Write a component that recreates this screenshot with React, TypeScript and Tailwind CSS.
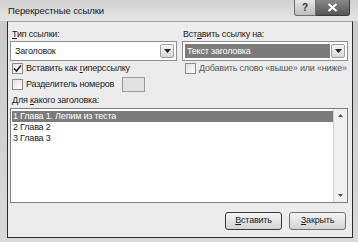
import React from 'react';

const Check: React.FC<{ checked?: boolean }> = ({ checked }) => (
  <div className="w-[11px] h-[11px] border border-[#8a8a8a] bg-gradient-to-br from-[#e2e2e2] to-[#fdfdfd] flex items-center justify-center shrink-0">
    {checked && (
      <svg width="9" height="9" viewBox="0 0 9 9">
        <path d="M1 4.5 L3.5 7 L8 1.5" fill="none" stroke="#222" strokeWidth="1.6" />
      </svg>
    )}
  </div>
);

const DropBtn: React.FC = () => (
  <div className="w-[14px] h-full border border-[#a0a0a0] rounded-[2px] bg-gradient-to-b from-[#f4f4f4] to-[#d6d6d6] flex items-center justify-center shrink-0">
    <svg width="7" height="4" viewBox="0 0 7 4">
      <path d="M0 0 H7 L3.5 4 Z" fill="#222" />
    </svg>
  </div>
);

const App: React.FC = () => {
  const items = ['1 Глава 1. Лепим из теста', '2 Глава 2', '3 Глава 3'];

  return (
    <div
      className="w-[358px] h-[242px] bg-gradient-to-b from-[#c9c9c9] to-[#d9d9d9] overflow-hidden text-[#1a1a1a] text-[9px] tracking-[-0.2px] whitespace-nowrap"
      style={{ fontFamily: '"Liberation Sans", Arial, sans-serif' }}
    >
      {/* title bar */}
      <div className="h-[21px] flex items-start bg-gradient-to-b from-[#d2d2d2] to-[#e4e4e4]">
        <div className="pl-[8px] pt-[5px] text-[9.5px] tracking-[-0.1px] leading-[12px]">Перекрестные ссылки</div>
        <div className="ml-auto mr-[8px] flex">
          <div className="w-[22px] h-[16px] border border-[#6f6f6f] border-t-0 rounded-bl-[3px] bg-gradient-to-b from-[#e8e8e8] to-[#bdbdbd] flex items-center justify-center text-[10px] font-bold text-[#333]">
            ?
          </div>
          <div className="w-[34px] h-[16px] border border-[#3c3c3c] border-l-0 border-t-0 rounded-br-[3px] bg-gradient-to-b from-[#8a8a8a] to-[#555] flex items-center justify-center">
            <svg width="11" height="9" viewBox="0 0 11 9">
              <path d="M1.5 1 L9.5 8 M9.5 1 L1.5 8" stroke="#fff" strokeWidth="2.2" />
            </svg>
          </div>
        </div>
      </div>

      {/* client */}
      <div className="ml-[7px] w-[346px] h-[217px] bg-[#ececec] border border-[#2a2a2a] border-t-[#a0a0a0] flex flex-col pl-[2px] pr-[4px] pt-[6px]">
        <div className="grid grid-cols-[167px_166px] gap-x-[5px]">
          <div className="pl-[2px] h-[13px] leading-[13px]">
            <span className="underline">Т</span>ип ссылки:
          </div>
          <div className="pl-[1px] h-[13px] leading-[13px]">
            Вст<span className="underline">а</span>вить ссылку на:
          </div>

          <div className="h-[20px] border border-[#8e8e8e] bg-white flex items-center p-[2px]">
            <div className="flex-1 pl-[2px] leading-[14px]">Заголовок</div>
            <DropBtn />
          </div>
          <div className="h-[20px] border border-[#8e8e8e] bg-white flex items-center p-[2px]">
            <div className="flex-1 h-full bg-[#7b7b7b] text-white pl-[2px] leading-[14px] mr-[1px]">Текст заголовка</div>
            <DropBtn />
          </div>

          <div className="h-[15px] flex items-center pl-[2px] gap-[3px]">
            <Check checked />
            <span>
              Вставить как <span className="underline">г</span>иперссылку
            </span>
          </div>
          <div className="h-[15px] flex items-center pl-[3px] gap-[3px]">
            <Check />
            <span className="text-[#555]">Добавить слово «выше» или «ниже»</span>
          </div>
        </div>

        <div className="h-[17px] flex items-center pl-[2px] gap-[3px]">
          <Check />
          <span className="w-[93px]">Разделитель номеров</span>
          <div className="w-[23px] h-[15px] border border-[#9a9a9a] bg-[#e2e2e2]" />
        </div>

        <div className="mt-[1px] h-[12px] leading-[12px] pl-[2px]">
          Для <span className="underline">к</span>акого заголовка:
        </div>

        <div className="mt-[2px] h-[95px] border border-[#7e7e7e] bg-white flex">
          <div className="flex-1 pt-[2px] pl-[1px]">
            {items.map((t, i) => (
              <div
                key={t}
                className={`h-[11px] leading-[11px] pl-[1px] ${i === 0 ? 'bg-[#7b7b7b] text-white' : ''}`}
              >
                {t}
              </div>
            ))}
          </div>
          <div className="w-[14px] border-l border-[#d0d0d0] bg-[#f0f0f0] flex flex-col items-center justify-between py-[5px]">
            <svg width="5" height="3" viewBox="0 0 5 3">
              <path d="M0 3 L2.5 0 L5 3 Z" fill="#555" />
            </svg>
            <svg width="5" height="3" viewBox="0 0 5 3">
              <path d="M0 0 H5 L2.5 3 Z" fill="#555" />
            </svg>
          </div>
        </div>

        <div className="mt-[9px] flex justify-end gap-[7px] mr-[2px]">
          <div className="w-[57px] h-[18px] border border-[#3a3a3a] rounded-[3px] bg-gradient-to-b from-[#f4f4f4] to-[#d4d4d4] flex items-center justify-center">
            <span>
              <span className="underline">В</span>ставить
            </span>
          </div>
          <div className="w-[57px] h-[18px] border border-[#707070] rounded-[3px] bg-gradient-to-b from-[#f4f4f4] to-[#d4d4d4] flex items-center justify-center">
            <span>
              <span className="underline">З</span>акрыть
            </span>
          </div>
        </div>
      </div>
    </div>
  );
};

export default App;
